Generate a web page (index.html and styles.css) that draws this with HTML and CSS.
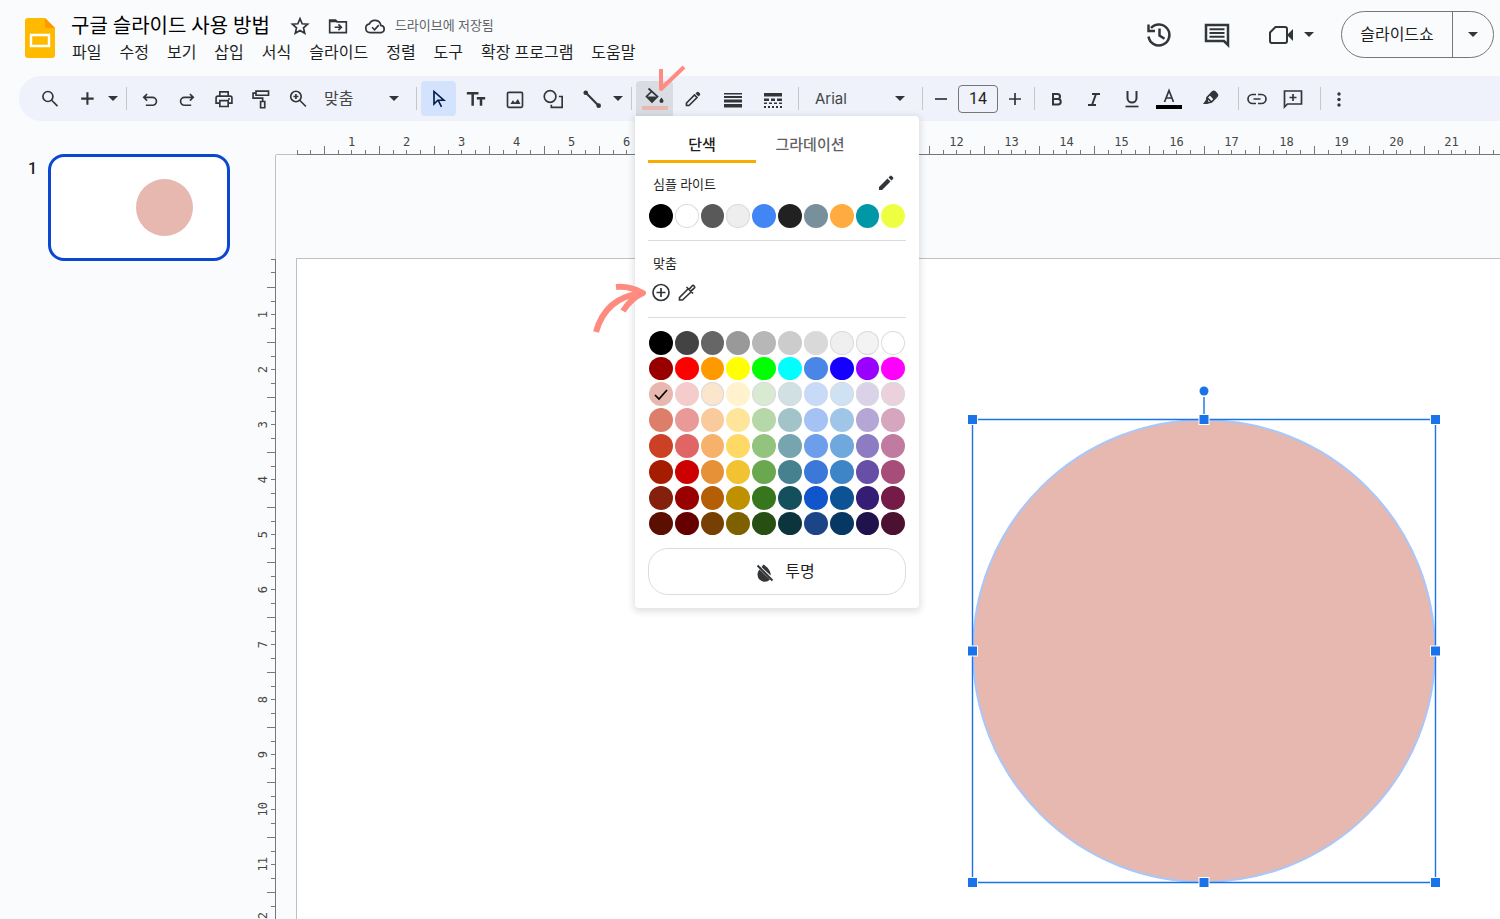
FILE: index.html
```html
<!DOCTYPE html>
<html lang="ko">
<head>
<meta charset="utf-8">
<meta name="viewport" content="width=device-width, initial-scale=1">
<title>구글 슬라이드 사용 방법</title>
<link rel="stylesheet" href="styles.css">
</head>
<body>
<header class="header">
  <svg class="logo" viewBox="0 0 30 40" aria-hidden="true"><path d="M3 0h17l10 10v27a3 3 0 0 1-3 3H3a3 3 0 0 1-3-3V3a3 3 0 0 1 3-3z" fill="#ffba00"/><path d="M20 0l10 10h-8a2 2 0 0 1-2-2z" fill="#ff9800"/><path d="M6 17h18v11H6z" fill="none" stroke="#fff" stroke-width="2.4"/></svg>
  <div class="doc">
    <div class="doc-line">
      <h1 class="doc-title">구글 슬라이드 사용 방법</h1>
      <button class="plain star" aria-label="별표"><svg class="ic20" viewBox="0 0 24 24"><path class="st" d="M12 3.2l2.6 6.1 6.6.6-5 4.4 1.5 6.5-5.700-3.500-5.700 3.500 1.500-6.500-5-4.400 6.600-.6z"/></svg></button>
      <button class="plain folder" aria-label="이동"><svg class="ic20" viewBox="0 0 24 24"><path class="st" d="M2 5h7l2 2h11v13H2z"/><path class="st" d="M2 6.500h9M8 13.500h7.500M12.500 10l3.500 3.500-3.500 3.500"/></svg></button>
      <button class="plain cloud" aria-label="저장 상태"><svg class="ic20 wide" viewBox="0 0 26 24"><path class="st" d="M7 20a5.300 5.300 0 0 1-.7-10.500A7.200 7.200 0 0 1 20 11.300 4.400 4.400 0 0 1 20.500 20z"/><path class="st" d="M9.500 13.500l3 3 5-5.500"/></svg></button>
      <span class="saved">드라이브에 저장됨</span>
    </div>
    <nav class="menu" aria-label="메뉴">
      <button>파일</button><button>수정</button><button>보기</button><button>삽입</button><button>서식</button><button>슬라이드</button><button>정렬</button><button>도구</button><button>확장 프로그램</button><button>도움말</button>
    </nav>
  </div>
  <div class="actions">
    <button class="plain" aria-label="버전 기록"><svg class="ic28" viewBox="0 0 28 28"><path class="st bold" d="M3.500 15.500A10.500 10.500 0 1 0 6 7M3.500 3.500v6.500H10M14.500 7.500v7l5 3.200"/></svg></button>
    <button class="plain" aria-label="댓글"><svg class="ic28" viewBox="0 0 28 28"><path class="st bold" d="M3 4h22v20l-4-4H3z"/><path class="st" d="M6.500 8.300h15M6.500 12h15M6.500 15.700h15"/></svg></button>
    <button class="plain meet" aria-label="화상 회의"><svg class="meet-icon" viewBox="0 0 24 20"><path class="st" d="M6.500 2H16a2 2 0 0 1 2 2v12a2 2 0 0 1-2 2H3a2 2 0 0 1-2-2V7.500z"/><path d="M18 10l6-6v12z"/></svg><svg class="caret" viewBox="0 0 10 5"><path d="M0 0h10L5 5z"/></svg></button>
    <div class="show">
      <button class="show-main">슬라이드쇼</button>
      <button class="show-more" aria-label="슬라이드쇼 옵션"><svg class="caret" viewBox="0 0 10 5"><path d="M0 0h10L5 5z"/></svg></button>
    </div>
  </div>
</header>

<div class="toolbar" role="toolbar" aria-label="도구 모음">
  <button class="tool" aria-label="검색"><svg class="ic20" viewBox="0 0 24 24"><circle class="st" cx="9.500" cy="9" r="6"/><path class="st" d="M14 13.500l7 7"/></svg></button>
  <button class="tool" aria-label="새 슬라이드"><svg class="ic20" viewBox="0 0 24 24"><path class="st bold" d="M12.500 4v15M5 11.500h15"/></svg></button>
  <button class="tool arrow" aria-label="레이아웃"><svg class="caret" viewBox="0 0 10 5"><path d="M0 0h10L5 5z"/></svg></button>
  <span class="sep"></span>
  <button class="tool" aria-label="실행취소"><svg class="ic20" viewBox="0 0 24 24"><path class="st" d="M8.500 6L4.500 10l4 4M5 10h10a4.700 4.700 0 0 1 0 9.500H7"/></svg></button>
  <button class="tool" aria-label="다시 실행"><svg class="ic20" viewBox="0 0 24 24"><path class="st" d="M15.500 6l4 4-4 4M19 10H9a4.700 4.700 0 0 0 0 9.500h8"/></svg></button>
  <button class="tool" aria-label="인쇄"><svg class="ic20" viewBox="0 0 24 24"><path class="st" d="M7 8V3.500h10V8M6.500 17H2.500v-6.500a2 2 0 0 1 2-2h15a2 2 0 0 1 2 2V17h-4M7 14h10v7H7z"/><circle cx="18" cy="12" r="1.200"/></svg></button>
  <button class="tool" aria-label="서식 복사"><svg class="ic20" viewBox="0 0 24 24"><path class="st" d="M6 2.500h15v5H6zM6 5H2.500v6H14v4M11.500 15h5v7.500h-5z"/></svg></button>
  <button class="tool" aria-label="확대"><svg class="ic20" viewBox="0 0 24 24"><circle class="st" cx="9.500" cy="9" r="6.300"/><path class="st" d="M14 13.500l7.500 7.500M6.500 9h6M9.500 6v6"/></svg></button>
  <div class="picker zoom"><select aria-label="확대/축소"><option>맞춤</option></select><svg class="caret" viewBox="0 0 10 5"><path d="M0 0h10L5 5z"/></svg></div>
  <span class="sep"></span>
  <button class="tool narrow pointer" aria-label="선택" aria-pressed="true"><svg class="ic20" viewBox="0 0 24 24"><path class="st" d="M6 3v15l4.500-4.500h7.300zM11 13.500l4 8"/></svg></button>
  <button class="tool roomy" aria-label="텍스트 상자"><svg class="ic20" viewBox="0 0 24 24"><path class="st heavy" d="M1 5h14M8 5v15M13 11h10M18 11v9"/></svg></button>
  <button class="tool" aria-label="이미지 삽입"><svg class="ic20" viewBox="0 0 24 24"><rect class="st" x="3" y="4" width="18" height="18" rx="1.500"/><path d="M6.500 18l3-4.500 2.500 3 3.500-4.500 3 6z"/></svg></button>
  <button class="tool roomy" aria-label="도형"><svg class="ic20 wide" viewBox="0 0 26 24"><circle class="st" cx="9.500" cy="9" r="7"/><path class="st" d="M20 9h4v13H11v-3"/></svg></button>
  <button class="tool" aria-label="선"><svg class="ic20" viewBox="0 0 24 24"><path class="st bold" d="M4 4l16 16"/><circle cx="4.500" cy="4.500" r="2.800"/><circle cx="20" cy="20" r="2.800"/></svg></button>
  <button class="tool arrow" aria-label="선 옵션"><svg class="caret" viewBox="0 0 10 5"><path d="M0 0h10L5 5z"/></svg></button>
  <span class="sep"></span>
  <div class="fill">
    <button class="tool fill-button" aria-label="채우기 색상" aria-expanded="true"><svg class="bucket" viewBox="0 0 20 18"><path class="st slim" d="M3.500 1.500l9 8-5.500 5.500L1.500 9.500 7 4"/><path d="M1.500 9.500h11L7 15.500z"/><path d="M16.500 10.500c1.500 2 2 2.700 2 3.600a2 2 0 0 1-4 0c0-.9.500-1.600 2-3.600z"/></svg><span class="fill-color"></span></button>
    <svg class="note-check" viewBox="0 0 30 28" aria-hidden="true"><path d="M5 4v20L28 2"/></svg>
    <svg class="note-arrow" viewBox="0 0 60 54" aria-hidden="true"><path d="M4 49C10 27 25 13 50 10M24 4c10-1 18 1 27 6-9 4-15 10-20 18"/></svg>
    <section class="panel" aria-label="채우기 색상">
      <div class="tabs" role="tablist">
        <button class="tab active" role="tab" aria-selected="true">단색</button>
        <button class="tab" role="tab" aria-selected="false">그라데이션</button>
      </div>
      <div class="panel-head"><h2>심플 라이트</h2><button class="plain" aria-label="테마 색상 수정"><svg class="ic16" viewBox="0 0 16 16"><path d="M1 12l8.500-8.500 3 3L4 15H1zM10.500 2.500L12 1a1.200 1.200 0 0 1 1.700 0L15 2.300A1.200 1.200 0 0 1 15 4l-1.500 1.500z"/></svg></button></div>
      <div class="swatches" id="theme"></div>
      <hr>
      <div class="panel-head custom"><h2>맞춤</h2></div>
      <div class="custom-tools">
        <button class="plain" aria-label="맞춤 색상 추가"><svg class="ic20" viewBox="0 0 20 20"><circle class="st slim" cx="10" cy="9.500" r="8"/><path class="st slim" d="M10 5v9M5.500 9.500h9"/></svg></button>
        <button class="plain" aria-label="색상 선택 도구"><svg class="ic20" viewBox="0 0 20 20"><path class="st slim" d="M11 6L2.500 14.500V17H5.500L14 9"/><path class="st slim" d="M9.500 4l6.500 6.500M12 6.500l3-3.500a1.500 1.500 0 0 1 2.200 2.200L13.500 8.500"/></svg></button>
      </div>
      <hr>
      <div class="swatches palette" id="palette"></div>
      <button class="none"><svg class="ic20" viewBox="0 0 20 20"><path d="M4.500 7.500L15 17.500A6 6 0 0 1 4.500 7.500zM8.500 2.500c1.500 1 3.500 2.500 5 4.500 1.500 2 2.300 4 2.200 6.500L6.500 5z"/><path class="st" d="M2.500 3.500l15 15"/></svg><span>투명</span></button>
    </section>
  </div>
  <button class="tool roomy" aria-label="테두리 색상"><svg class="ic16" viewBox="0 0 16 16"><path class="st slim" d="M1.500 14.500v-2.500l8-8 2.500 2.500-8 8z"/><path d="M10.500 2.500L12 1q.8-.6 1.500 0L15 2.500q.6.700 0 1.500l-1.500 1.500z"/></svg></button>
  <button class="tool roomy" aria-label="테두리 두께"><svg class="ic20" viewBox="0 0 20 18"><path d="M1 3h18v1.500H1zM1 6h18v2H1zM1 9.500h18v3H1zM1 14h18v3.500H1z"/></svg></button>
  <button class="tool roomy" aria-label="테두리 대시"><svg class="ic20" viewBox="0 0 20 18"><path d="M1 3h18v3.500H1zM1 8.500h5v2.500H1zM8 8.500h4v2.500H8zM14 8.500h5v2.500h-5zM1 12.500h3v1.500H1zM6 12.500h3v1.500H6zM11 12.500h3v1.500h-3zM16 12.500h3v1.500h-3zM1 16h2v2H1zM5 16h2v2H5zM9 16h2v2H9zM13 16h2v2h-2zM17 16h2v2h-2z"/></svg></button>
  <span class="sep"></span>
  <div class="picker font"><select aria-label="글꼴"><option>Arial</option></select><svg class="caret" viewBox="0 0 10 5"><path d="M0 0h10L5 5z"/></svg></div>
  <span class="sep"></span>
  <button class="tool tight" aria-label="글꼴 크기 줄이기"><svg class="ic16" viewBox="0 0 16 16"><path class="st slim" d="M2 8h12"/></svg></button>
  <input class="size" type="text" value="14" aria-label="글꼴 크기">
  <button class="tool tight" aria-label="글꼴 크기 늘리기"><svg class="ic16" viewBox="0 0 16 16"><path class="st slim" d="M2 8h12M8 2v12"/></svg></button>
  <span class="sep"></span>
  <button class="tool narrow" aria-label="굵게"><svg class="ic16" viewBox="0 0 16 16"><path class="st" d="M4 3h4.500a2.500 2.500 0 0 1 0 5H4zM4 8h5a2.700 2.700 0 0 1 0 5.500H4z"/></svg></button>
  <button class="tool roomy" aria-label="기울임꼴"><svg class="ic16" viewBox="0 0 16 16"><path class="st" d="M6 3h8M2 14h8M10 3L6 14"/></svg></button>
  <button class="tool narrow" aria-label="밑줄"><svg class="ic20" viewBox="0 0 20 20"><path class="st" d="M5.500 2v7a4.500 4.500 0 0 0 9 0V2"/><path class="st slim" d="M3.500 17.500h13"/></svg></button>
  <button class="tool roomy text-color" aria-label="텍스트 색상"><svg class="ic16" viewBox="0 0 16 16"><path class="st slim" d="M3.500 13L8 1.500 12.500 13M5 9h6"/></svg><span class="text-bar"></span></button>
  <button class="tool spacious" aria-label="강조 색상"><svg class="ic20" viewBox="0 0 20 20"><path class="st slim" d="M6 8.500l4.500 4.500M6 8.500L11.500 3a2 2 0 0 1 2.500 0l2 2a2 2 0 0 1 0 2.500L10.500 13 6.500 14z"/><path d="M8.500 6L12 2.500c1.500-1.200 5.500 2.300 4 4.500L12.500 10.500zM6 8l-1.500 3.500L2 15h4l1.500-1.500z"/></svg></button>
  <span class="sep"></span>
  <button class="tool tight" aria-label="링크 삽입"><svg class="ic20" viewBox="0 0 20 20"><path class="st slim" d="M9 5.500H5.500a4.500 4.500 0 0 0 0 9H9M11 5.500h3.500a4.500 4.500 0 0 1 0 9H11M6.500 10h7"/></svg></button>
  <button class="tool spacious" aria-label="댓글 추가"><svg class="ic20" viewBox="0 0 20 20"><path class="st slim" d="M1.500 18V2h17v13H4.500zM10 5v7M6.500 8.500h7"/></svg></button>
  <span class="sep"></span>
  <button class="tool tight" aria-label="더보기"><svg class="ic20" viewBox="0 0 20 20"><circle cx="10" cy="5" r="1.700"/><circle cx="10" cy="10.500" r="1.700"/><circle cx="10" cy="16" r="1.700"/></svg></button>
</div>

<main class="editor">
  <aside class="film" aria-label="슬라이드 목록">
    <span class="film-number">1</span>
    <button class="thumb" aria-label="슬라이드 1"><svg viewBox="0 0 176 101"><circle cx="113.500" cy="50.500" r="28.500"/></svg></button>
  </aside>
  <div class="ruler-x" id="ruler-x"></div>
  <div class="ruler-y" id="ruler-y"></div>
  <div class="workspace">
    <div class="slide">
      <svg class="shape" viewBox="0 0 464 464" role="img" aria-label="원">
        <circle class="disc" cx="232" cy="232" r="231"/>
        <path class="frame" d="M.5 .5h463v463H.5zM232 0v-22"/>
        <circle class="knob" cx="232" cy="-28" r="4.500"/>
        <g class="grips">
          <rect x="-4.500" y="-4.500" width="10" height="10"/><rect x="227" y="-4.500" width="10" height="10"/><rect x="458.500" y="-4.500" width="10" height="10"/>
          <rect x="-4.500" y="227" width="10" height="10"/><rect x="458.500" y="227" width="10" height="10"/>
          <rect x="-4.500" y="458.500" width="10" height="10"/><rect x="227" y="458.500" width="10" height="10"/><rect x="458.500" y="458.500" width="10" height="10"/>
        </g>
      </svg>
    </div>
  </div>
</main>
<script src="app.js"></script>
</body>
</html>
```

FILE: styles.css
```css
* { box-sizing: border-box; }

body {
  margin: 0;
  height: 100vh;
  overflow: hidden;
  display: flex;
  flex-direction: column;
  background: #f9fbfd;
  color: #1f1f1f;
  font-family: Roboto, "Noto Sans CJK KR", sans-serif;
  font-size: 16px;
}

button, select, input {
  margin: 0;
  padding: 0;
  border: 0;
  background: none;
  color: inherit;
  font: inherit;
}

h1, h2 { margin: 0; font-weight: 400; }

svg { display: block; flex: none; fill: #333639; overflow: visible; }
.st { fill: none; stroke: #333639; stroke-width: 2; }
.slim { stroke-width: 1.7; }
.bold { stroke-width: 2.500; }
.heavy { stroke-width: 3; }
.ic16 { width: 16px; height: 16px; }
.ic20 { width: 20px; height: 20px; }
.ic20.wide { width: 22px; }
.ic28 { width: 28px; height: 28px; }
.caret { width: 10px; height: 5px; }
.plain { display: flex; align-items: center; }

/* Header */
.header {
  flex: none;
  display: flex;
  height: 76px;
  padding: 11px 6px 0 25px;
}
.logo { width: 30px; height: 40px; margin: 7px 16px 0 0; }
.doc { flex: 1; }
.doc-line { display: flex; align-items: center; height: 30px; white-space: nowrap; }
.doc-title { font-size: 20px; line-height: 30px; color: #000; }
.star { margin-left: 20px; }
.folder { margin-left: 18px; }
.cloud { margin-left: 16px; }
.saved { margin-left: 9px; padding-bottom: 3px; font-size: 13px; color: #5f6368; }
.menu { display: flex; gap: 18px; padding-left: 1px; line-height: 24px; white-space: nowrap; }
.actions { display: flex; align-items: center; height: 47px; }
.actions > .plain { margin-right: 30px; }
.meet { gap: 11px; margin-left: 8px; }
.meet-icon { width: 24px; height: 20px; }
.actions > .meet { margin-right: 27px; }
.show {
  display: flex;
  height: 47px;
  border: 1px solid #747775;
  border-radius: 24px;
}
.show-main { width: 111px; border-right: 1px solid #747775; padding: 0 0 4px; }
.show-more { width: 40px; display: grid; place-items: center; }

/* Toolbar */
.toolbar {
  flex: none;
  position: relative;
  z-index: 1;
  display: flex;
  align-items: center;
  height: 45px;
  margin-left: 19px;
  padding-left: 12px;
  border-radius: 22px 0 0 22px;
  background: #eff2fa;
}
.tool {
  flex: none;
  display: flex;
  align-items: center;
  justify-content: center;
  width: 37px;
  height: 35px;
}
.tool.arrow { width: 16px; }
.tool.tight { width: 28px; }
.tool.narrow { width: 35px; }
.tool.roomy { width: 40px; }
.tool.spacious { width: 44px; }
.tool.pointer { border-radius: 4px; background: #d3e3fd; }
.pointer .st { stroke: #041e49; }
.sep { flex: none; width: 1px; height: 23px; margin: 0 4px 0 5px; background: #c7c7c7; }
.picker { flex: none; display: grid; align-items: center; }
.picker > * { grid-area: 1 / 1; }
.picker select { width: 100%; appearance: none; color: #444746; line-height: 24px; }
.picker .caret { justify-self: end; margin-right: 12px; pointer-events: none; }
.zoom { width: 95px; }
.zoom select { padding-left: 8px; }
.font { width: 114px; }
.font select { padding-left: 12px; font-family: Inter, sans-serif; font-size: 15px; }
.size {
  width: 40px;
  height: 28px;
  margin: 0 3px;
  border: 1px solid #747775;
  border-radius: 4px;
  text-align: center;
}
.text-color, .fill-button { flex-direction: column; }
.text-bar { width: 26px; height: 4px; background: #000; }
.fill { position: relative; flex: none; }
.fill-button { gap: 1px; border-radius: 4px 4px 0 0; background: #dadce3; }
.bucket { width: 20px; height: 18px; }
.fill-color { width: 26px; height: 4px; background: #e6b8af; }

/* Hand-drawn pointers over the toolbar and panel */
.note-check, .note-arrow {
  position: absolute;
  z-index: 2;
  fill: none;
  stroke: #ff8b80;
  pointer-events: none;
}
.note-check { left: 20px; top: -16px; width: 30px; height: 28px; stroke-width: 4; stroke-linejoin: round; }
.note-arrow { left: -44px; top: 202px; width: 60px; height: 54px; stroke-width: 6; stroke-linejoin: round; }

/* Fill colour panel */
.panel {
  position: absolute;
  left: -1px;
  top: 100%;
  width: 284px;
  padding: 12px 13px 13px;
  border-radius: 0 4px 4px 4px;
  background: #fff;
  box-shadow: 0 2px 6px 2px rgba(60, 64, 67, 0.15);
}
.tabs { display: flex; }
.tab {
  width: 108px;
  height: 35px;
  padding-bottom: 2px;
  border-bottom: 3px solid transparent;
  font-size: 15px;
  font-weight: 500;
  color: #5f6368;
}
.tab.active { border-color: #f9ab00; color: #202124; }
.panel-head {
  display: flex;
  align-items: center;
  justify-content: space-between;
  height: 40px;
  padding: 0 12px 0 5px;
}
.panel-head h2 { font-size: 13px; }
.panel-head.custom { margin-top: 2px; }
.swatches { display: grid; grid-template-columns: repeat(10, 1fr); }
.swatch {
  display: grid;
  place-items: center;
  aspect-ratio: 1;
  border: 1px solid transparent;
  border-radius: 50%;
  background-clip: padding-box;
}
.swatch.pale { box-shadow: inset 0 0 0 1px #dadce0; }
.swatch .st { stroke: #000; stroke-width: 1.7; }
.panel hr { height: 1px; margin: 11px 0 0; border: 0; background: #dadce0; }
.custom-tools { display: flex; gap: 6px; padding: 0 3px 3px; }
.palette { margin-top: 12px; }
.none {
  display: flex;
  align-items: center;
  justify-content: center;
  gap: 10px;
  width: 100%;
  height: 47px;
  margin-top: 12px;
  padding-left: 16px;
  border: 1px solid #dadce0;
  border-radius: 20px;
}
.none span { padding-bottom: 4px; }

/* Editor */
.editor {
  flex: 1;
  min-height: 0;
  display: grid;
  grid-template-columns: 240px 36px 1fr;
  grid-template-rows: 34px 1fr;
}
.film {
  grid-row: 1 / 3;
  display: flex;
  align-items: flex-start;
  justify-content: flex-end;
  gap: 11px;
  padding: 33px 10px 0 0;
}
.film-number { padding-top: 5px; font-weight: 500; }
.thumb {
  width: 182px;
  border: 3px solid #0b47d0;
  border-radius: 16px;
  background: #fff;
}
.thumb svg { width: 100%; fill: #e6b8af; }

.ruler-x, .ruler-y {
  display: flex;
  overflow: hidden;
  color: #444746;
  font: 12px/14px "DejaVu Sans Mono", monospace;
}
.ruler-x { grid-column: 3; padding-left: 21px; box-shadow: inset 0 -1px #bdc1c6; }
.ruler-y {
  grid-column: 2;
  flex-direction: column;
  padding-top: 104px;
  box-shadow: inset -1px 0 #bdc1c6;
}
.ruler-x > *, .ruler-y > * {
  --tick: linear-gradient(#777, #777);
  flex: none;
  background-image: var(--tick), var(--tick), var(--tick), var(--tick), var(--tick);
  background-repeat: no-repeat;
}
.ruler-x > * {
  width: 55px;
  padding-top: 14px;
  text-align: center;
  background-size: 1px 9px, 1px 5px, 1px 5px, 1px 5px, 100% 1px;
  background-position: 0 100%, 14px 100%, 27px 100%, 41px 100%, 0 100%;
}
.ruler-x > .start {
  width: 27px;
  background-size: 0 0, 1px 5px, 1px 5px, 0 0, 100% 1px;
  background-position: 0 0, 0 100%, 13px 100%, 0 0, 0 100%;
}
.ruler-y > * {
  height: 55px;
  background-size: 9px 1px, 5px 1px, 5px 1px, 5px 1px, 1px 100%;
  background-position: 100% 0, 100% 14px, 100% 27px, 100% 41px, 100% 0;
  display: grid;
  align-items: center;
  padding-left: 16px;
}
.ruler-y > .start {
  height: 28px;
  background-size: 0 0, 5px 1px, 5px 1px, 0 0, 1px 100%;
  background-position: 0 0, 100% 0, 100% 13px, 0 0, 100% 0;
}
.ruler-y span { writing-mode: vertical-rl; transform: rotate(180deg); justify-self: start; }

.workspace { grid-column: 3; display: grid; min-width: 0; padding: 103px 0 0 20px; overflow: hidden; }
.slide {
  position: relative;
  border: solid #bdc1c6;
  border-width: 1px 0 0 1px;
  background: #fff;
}
.shape { position: absolute; left: 675px; top: 160px; width: 464px; height: 464px; }
.disc { fill: #e6b8af; stroke: #a8c7fa; stroke-width: 2; }
.frame { fill: none; stroke: #1a73e8; stroke-width: 1.4; }
.knob { fill: #1a73e8; }
.grips { fill: #1a73e8; stroke: #fff; stroke-width: 1; }
```

FILE: app.js
```js
const theme = ['#000000 #ffffff #595959 #eeeeee #4285f4 #212121 #78909c #ffab40 #0097a7 #eeff41'];

const palette = [
  '#000000 #434343 #666666 #999999 #b7b7b7 #cccccc #d9d9d9 #efefef #f3f3f3 #ffffff',
  '#980000 #ff0000 #ff9900 #ffff00 #00ff00 #00ffff #4a86e8 #1500ff #9900ff #ff00ff',
  '#e6b8af #f4cccc #fce5cd #fff2cc #d9ead3 #d0e0e3 #c9daf8 #cfe2f3 #d9d2e9 #ead1dc',
  '#dd7e6b #ea9999 #f9cb9c #ffe599 #b6d7a8 #a2c4c9 #a4c2f4 #9fc5e8 #b4a7d6 #d5a6bd',
  '#cc4125 #e06666 #f6b26b #ffd966 #93c47d #76a5af #6d9eeb #6fa8dc #8e7cc3 #c27ba0',
  '#a61c00 #cc0000 #e69138 #f1c232 #6aa84f #45818e #3c78d8 #3d85c6 #674ea7 #a64d79',
  '#85200c #990000 #b45f06 #bf9000 #38761d #134f5c #1155cc #0b5394 #351c75 #741b47',
  '#5b0f00 #660000 #783f04 #7f6000 #274e13 #0c343d #1c4587 #073763 #20124d #4c1130'
];

const selected = '#e6b8af';
const tick = '<svg class="ic16" viewBox="0 0 16 16"><path class="st" d="M2 9l4 4 8-9"/></svg>';

function isPale(color) {
  const parts = [1, 3, 5].map(i => parseInt(color.slice(i, i + 2), 16));
  return Math.min(...parts) > 204;
}

function fillSwatches(id, rows) {
  const box = document.getElementById(id);
  rows.join(' ').split(' ').forEach(color => {
    const swatch = document.createElement('button');
    swatch.className = isPale(color) ? 'swatch pale' : 'swatch';
    swatch.style.backgroundColor = color;
    swatch.setAttribute('aria-label', color);
    if (color === selected) swatch.innerHTML = tick;
    box.append(swatch);
  });
}

function fillRuler(id, count) {
  const ruler = document.getElementById(id);
  const start = document.createElement('div');
  start.className = 'start';
  ruler.append(start);
  for (let n = 1; n <= count; n++) {
    const cell = document.createElement('div');
    const label = document.createElement('span');
    label.textContent = n;
    cell.append(label);
    ruler.append(cell);
  }
}

fillSwatches('theme', theme);
fillSwatches('palette', palette);
fillRuler('ruler-x', 22);
fillRuler('ruler-y', 12);
```
